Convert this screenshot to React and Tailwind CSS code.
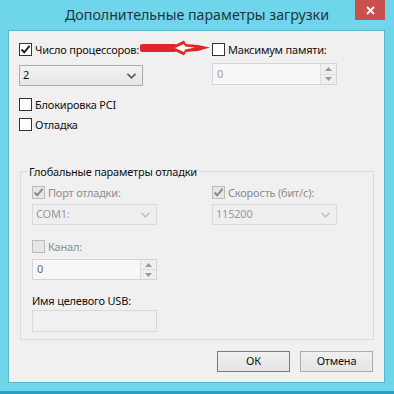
import React from 'react';

const font = { fontFamily: '"Noto Sans", "Liberation Sans", sans-serif' };

function Check({ checked, disabled }) {
  return (
    <div
      className={
        'w-[13px] h-[13px] border flex items-center justify-center shrink-0 ' +
        (disabled ? 'border-[#bcbcbc] bg-[#e6e6e6]' : 'border-[#333333] bg-white')
      }
    >
      {checked && (
        <svg width="11" height="11" viewBox="0 0 11 11">
          <path
            d="M1.5 5.5 L4.2 8.3 L9.6 1.8"
            fill="none"
            stroke={disabled ? '#8a8a8a' : '#1f1f1f'}
            strokeWidth="2"
          />
        </svg>
      )}
    </div>
  );
}

function CheckRow({ label, checked, disabled }) {
  return (
    <div className="flex items-center h-[13px]">
      <Check checked={checked} disabled={disabled} />
      <span className={'ml-[3px] text-[11px] tracking-[-0.2px] leading-none ' + (disabled ? 'text-[#8d8d8d]' : 'text-[#111]')}>
        {label}
      </span>
    </div>
  );
}

function Chevron({ color }) {
  return (
    <svg width="9" height="6" viewBox="0 0 9 6">
      <path d="M0.5 0.8 L4.5 4.8 L8.5 0.8" fill="none" stroke={color} strokeWidth="1.6" />
    </svg>
  );
}

function Select({ value, disabled, w }) {
  return (
    <div
      className={
        'h-[21px] border flex items-center justify-between pl-[3px] pr-[6px] text-[11px] tracking-[-0.2px] ' +
        (disabled
          ? 'border-[#d9d9d9] bg-[#efefef] text-[#9a9a9a]'
          : 'border-[#acacac] bg-gradient-to-b from-[#f2f2f2] to-[#e6e6e6] text-[#111]') +
        ' ' +
        w
      }
    >
      <span>{value}</span>
      <Chevron color={disabled ? '#c4c4c4' : '#5a5a5a'} />
    </div>
  );
}

function Spinner({ value, textColor, w, h }) {
  return (
    <div className={'border border-[#d4d4d4] bg-[#f7f7f7] flex ' + w + ' ' + h}>
      <div className={'flex-1 flex items-center pl-[4px] text-[11px] ' + textColor}>{value}</div>
      <div className="w-[16px] border-l border-[#dcdcdc] flex flex-col">
        <div className="flex-1 flex items-center justify-center border-b border-[#dcdcdc] bg-[#efefef]">
          <svg width="7" height="4" viewBox="0 0 7 4">
            <path d="M0 4 L3.5 0 L7 4 Z" fill="#9a9a9a" />
          </svg>
        </div>
        <div className="flex-1 flex items-center justify-center bg-[#efefef]">
          <svg width="7" height="4" viewBox="0 0 7 4">
            <path d="M0 0 L3.5 4 L7 0 Z" fill="#9a9a9a" />
          </svg>
        </div>
      </div>
    </div>
  );
}

function Button({ label, primary }) {
  return (
    <div
      className={
        'w-[73px] h-[21px] border flex items-center justify-center text-[11px] tracking-[-0.2px] text-[#111] bg-gradient-to-b from-[#f0f0f0] to-[#e5e5e5] ' +
        (primary ? 'border-[#4a86c0]' : 'border-[#acacac]')
      }
    >
      {label}
    </div>
  );
}

export default function App() {
  return (
    <div className="w-[394px] h-[394px] bg-[#6fd5ea] flex flex-col overflow-hidden relative" style={font}>
      <div className="h-[30px] relative flex items-center justify-center shrink-0">
        <span className="text-[14.2px] text-[#1f3540]">Дополнительные параметры загрузки</span>
        <div className="absolute top-0 right-[9px] w-[30px] h-[20px] bg-[#c9504c] flex items-center justify-center">
          <svg width="9" height="9" viewBox="0 0 9 9">
            <path d="M1 1 L8 8 M8 1 L1 8" stroke="#fff" strokeWidth="1.8" />
          </svg>
        </div>
      </div>

      <div className="ml-[8px] mr-[9px] h-[353px] border border-[#59b9cc] bg-[#f0f0f0] pl-[10px] pt-[12px] relative">
        <div className="flex">
          <div className="w-[193px]">
            <CheckRow label="Число процессоров:" checked />
            <div className="mt-[9px]">
              <Select value="2" w="w-[124px]" />
            </div>
            <div className="mt-[12px]">
              <CheckRow label="Блокировка PCI" />
            </div>
            <div className="mt-[7px]">
              <CheckRow label="Отладка" />
            </div>
          </div>
          <div>
            <CheckRow label="Максимум памяти:" />
            <div className="mt-[7px]">
              <Spinner value="0" textColor="text-[#a0a0a0]" w="w-[125px]" h="h-[22px]" />
            </div>
          </div>
        </div>

        <div className="mt-[40px] ml-[1px] w-[354px] h-[169px] border border-[#dcdcdc] relative pl-[11px] pt-[14px]">
          <span className="absolute -top-[8px] left-[6px] px-[2px] bg-[#f0f0f0] text-[11px] tracking-[-0.2px] leading-[15px] text-[#111]">
            Глобальные параметры отладки
          </span>
          <div className="flex">
            <div className="w-[180px]">
              <CheckRow label="Порт отладки:" checked disabled />
              <div className="mt-[5px]">
                <Select value="COM1:" disabled w="w-[125px]" />
              </div>
              <div className="mt-[15px]">
                <CheckRow label="Канал:" disabled />
              </div>
              <div className="mt-[6px]">
                <Spinner value="0" textColor="text-[#6a6a6a]" w="w-[125px]" h="h-[21px]" />
              </div>
              <div className="mt-[13px] text-[11px] tracking-[-0.2px] leading-[15px] text-[#111]">Имя целевого USB:</div>
              <div className="mt-[2px] w-[125px] h-[22px] border border-[#d9d9d9] bg-[#f0f0f0]" />
            </div>
            <div>
              <CheckRow label="Скорость (бит/с):" checked disabled />
              <div className="mt-[5px]">
                <Select value="115200" disabled w="w-[125px]" />
              </div>
            </div>
          </div>
        </div>

        <div className="mt-[11px] flex justify-end gap-[10px] pr-[11px]">
          <Button label="ОК" primary />
          <Button label="Отмена" />
        </div>

        <svg className="absolute left-[131px] top-[8px]" width="72" height="18" viewBox="0 0 72 18">
          <path d="M3 9 L34 9" stroke="#e0262b" strokeWidth="8" strokeLinecap="round" />
          <path d="M29 9 L44 1.5 L46 5 L58 6 L70 8.5 L58 12 L46 13 L44 16.5 Z" fill="#e0262b" />
          <path d="M35 9 L44 5 L45 7.5 L55 8.5 L45 10.5 L44 13 Z" fill="#ffffff" />
        </svg>
      </div>
      <div className="absolute bottom-0 left-0 w-full h-[3px] bg-[#2a9fc4]" />
    </div>
  );
}
